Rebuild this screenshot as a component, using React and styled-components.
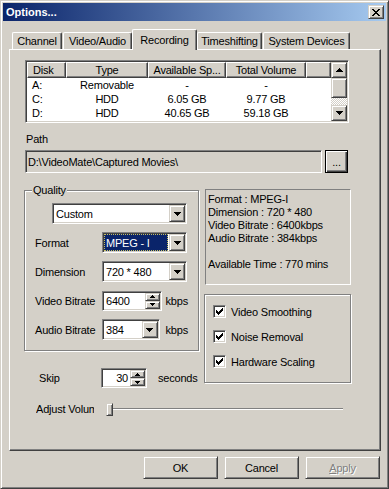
import React from 'react';
import styled, { createGlobalStyle, css } from 'styled-components';

const GlobalStyle = createGlobalStyle`
    html, body {
        margin: 0;
        padding: 0;
        background: #d4d0c8;
    }
    body {
        font-family: "Liberation Sans", Arial, sans-serif;
        font-size: 11px;
        color: #000;
    }
    * {
        box-sizing: border-box;
    }
`;

const raisedEdge = css`
    border: 1px solid;
    border-color: #d4d0c8 #404040 #404040 #d4d0c8;
    box-shadow: inset 1px 1px #fff, inset -1px -1px #808080;
`;

const sunkenEdge = css`
    border: 1px solid;
    border-color: #808080 #fff #fff #808080;
    box-shadow: inset 1px 1px #404040, inset -1px -1px #d4d0c8;
`;

const etchedEdge = css`
    border: 1px solid #808080;
    box-shadow: inset 1px 1px #fff, 1px 1px #fff;
`;

const Window = styled.div`
    width: 389px;
    height: 489px;
    ${raisedEdge}
    padding: 2px;
    display: flex;
    flex-direction: column;
    background: #d4d0c8;
    letter-spacing: -0.2px;
`;

const TitleBar = styled.div`
    height: 18px;
    display: flex;
    align-items: center;
    padding: 0 2px 0 3px;
    background: linear-gradient(to right, #0a246a, #a6caf0);
`;

const Title = styled.span`
    color: #fff;
    font-weight: bold;
    letter-spacing: 0;
`;

const CaptionButton = styled.div`
    margin-left: auto;
    width: 16px;
    height: 14px;
    ${raisedEdge}
    background: #d4d0c8;
    display: flex;
    align-items: center;
    justify-content: center;
`;

const Body = styled.div`
    flex: 1;
    display: flex;
    flex-direction: column;
    padding: 8px 5px 7px 6px;
`;

const TabRow = styled.div`
    height: 20px;
    display: flex;
    align-items: flex-end;
    padding-left: 3px;
    position: relative;
    z-index: 1;
`;

const Tab = styled.div`
    width: ${props => props.$w}px;
    margin-right: ${props => props.$gap}px;
    height: ${props => props.$active ? 21 : 17}px;
    margin-bottom: ${props => props.$active ? -1 : 0}px;
    padding-bottom: ${props => props.$active ? 1 : 0}px;
    background: #d4d0c8;
    border-top: 1px solid #fff;
    border-left: 1px solid #fff;
    border-right: 1px solid #404040;
    box-shadow: inset -1px 0 #808080;
    border-radius: 2px 2px 0 0;
    display: flex;
    align-items: center;
    justify-content: center;
    white-space: nowrap;
`;

const Panel = styled.div`
    flex: 1;
    border: 1px solid;
    border-color: #fff #404040 #404040 #fff;
    box-shadow: inset -1px -1px #808080;
    padding: 10px 0 0 15px;
    display: flex;
    flex-direction: column;
`;

const ListView = styled.div`
    width: 324px;
    height: 63px;
    ${sunkenEdge}
    padding: 1px;
    background: #fff;
    display: flex;
`;

const ListMain = styled.div`
    flex: 1;
    display: flex;
    flex-direction: column;
    overflow: hidden;
`;

const HeaderRow = styled.div`
    height: 16px;
    display: flex;
    background: #d4d0c8;
`;

const HeaderCell = styled.div`
    width: ${props => props.$w ? props.$w + 'px' : 'auto'};
    flex: ${props => props.$w ? 'none' : 1};
    height: 16px;
    border-top: 1px solid #fff;
    border-left: 1px solid #fff;
    border-right: 1px solid #404040;
    border-bottom: 1px solid #404040;
    box-shadow: inset -1px -1px #808080;
    display: flex;
    align-items: center;
    justify-content: ${props => props.$left ? 'flex-start' : 'center'};
    padding-left: ${props => props.$left ? 5 : 0}px;
    white-space: nowrap;
    overflow: hidden;
`;

const ListRow = styled.div`
    height: 14px;
    display: flex;
    align-items: center;
`;

const ListCell = styled.div`
    width: ${props => props.$w}px;
    text-align: ${props => props.$left ? 'left' : 'center'};
    padding-left: ${props => props.$left ? 5 : 0}px;
    white-space: nowrap;
`;

const ScrollBar = styled.div`
    width: 16px;
    display: flex;
    flex-direction: column;
`;

const ScrollButton = styled.div`
    height: ${props => props.$h}px;
    ${raisedEdge}
    background: #d4d0c8;
    display: flex;
    align-items: center;
    justify-content: center;
`;

const ScrollTrack = styled.div`
    flex: 1;
    background: repeating-conic-gradient(#fff 0% 25%, #d4d0c8 0% 50%) 0 0 / 2px 2px;
`;

const FieldLabel = styled.div`
    margin: 10px 0 0 1px;
    line-height: 13px;
`;

const PathRow = styled.div`
    margin-top: 4px;
    display: flex;
    gap: 3px;
    height: 23px;
`;

const PathField = styled.div`
    width: 297px;
    ${sunkenEdge}
    background: #d4d0c8;
    display: flex;
    align-items: center;
    padding-left: 2px;
    white-space: nowrap;
`;

const BrowseButton = styled.div`
    width: 23px;
    border: 1px solid #000;
    box-shadow: inset 1px 1px #fff, inset -1px -1px #404040, inset -2px -2px #808080;
    display: flex;
    align-items: center;
    justify-content: center;
    padding-top: 1px;
`;

const Middle = styled.div`
    margin: 11px 0 0 -1px;
    display: flex;
    gap: 6px;
    align-items: flex-start;
`;

const Column = styled.div`
    width: ${props => props.$w}px;
    display: flex;
    flex-direction: column;
`;

const GroupBox = styled.div`
    position: relative;
    ${etchedEdge}
    margin-top: ${props => props.$top}px;
    margin-left: ${props => props.$left || 0}px;
    height: ${props => props.$h}px;
    padding: ${props => props.$pad};
    display: flex;
    flex-direction: column;
    gap: ${props => props.$gap}px;
`;

const GroupTitle = styled.span`
    position: absolute;
    top: -7px;
    left: 7px;
    padding: 0 1px;
    line-height: 13px;
    background: #d4d0c8;
`;

const PresetRow = styled.div`
    padding-left: 17px;
    display: flex;
`;

const FormRow = styled.div`
    height: 21px;
    display: flex;
    align-items: center;
`;

const RowLabel = styled.span`
    width: ${props => props.$w}px;
    flex: none;
    white-space: nowrap;
`;

const Unit = styled.span`
    margin-left: ${props => props.$gap}px;
`;

const ComboBox = styled.div`
    width: ${props => props.$w}px;
    height: 21px;
    ${sunkenEdge}
    padding: 1px;
    background: #fff;
    display: flex;
`;

const ComboValue = styled.div`
    flex: 1;
    display: flex;
    align-items: center;
    padding-left: 2px;
    margin-right: 1px;
    white-space: nowrap;
    background: ${props => props.$selected ? '#0a246a' : 'transparent'};
    color: ${props => props.$selected ? '#fff' : '#000'};
    outline: ${props => props.$selected ? '1px dotted #c8c060' : 'none'};
    outline-offset: -1px;
`;

const DropButton = styled.div`
    width: 16px;
    ${raisedEdge}
    background: #d4d0c8;
    display: flex;
    align-items: center;
    justify-content: center;
`;

const SpinBox = styled.div`
    width: ${props => props.$w}px;
    height: 20px;
    ${sunkenEdge}
    padding: 1px;
    background: #fff;
    display: flex;
`;

const SpinValue = styled.div`
    flex: 1;
    display: flex;
    align-items: center;
    justify-content: ${props => props.$right ? 'flex-end' : 'flex-start'};
    padding: 0 2px;
`;

const SpinButtons = styled.div`
    width: 15px;
    display: flex;
    flex-direction: column;
`;

const SpinButton = styled.div`
    flex: 1;
    ${raisedEdge}
    background: #d4d0c8;
    display: flex;
    align-items: center;
    justify-content: center;
`;

const SkipRow = styled.div`
    margin-top: 17px;
    padding-left: 15px;
    height: 20px;
    display: flex;
    align-items: center;
`;

const InfoBox = styled.div`
    margin-top: 5px;
    height: 96px;
    border: 1px solid;
    border-color: #808080 #fff #fff #808080;
    padding: 3px 2px;
    line-height: 13px;
    white-space: pre;
`;

const CheckRow = styled.div`
    height: 25px;
    display: flex;
    align-items: center;
    gap: 5px;
`;

const CheckBox = styled.div`
    width: 13px;
    height: 13px;
    ${sunkenEdge}
    background: #fff;
    display: flex;
    align-items: center;
    justify-content: center;
`;

const VolumeRow = styled.div`
    margin-top: 13px;
    padding-left: 11px;
    height: 16px;
    display: flex;
    align-items: center;
`;

const ClippedLabel = styled.span`
    width: 58px;
    margin-right: 12px;
    overflow: hidden;
    white-space: nowrap;
`;

const Slider = styled.div`
    width: 237px;
    height: 16px;
    display: flex;
    align-items: center;
    background:
        linear-gradient(#808080, #808080) 0 7px / 100% 1px no-repeat,
        linear-gradient(#fff, #fff) 0 8px / 100% 1px no-repeat;
`;

const SliderThumb = styled.div`
    width: 7px;
    height: 13px;
    ${raisedEdge}
    background: #d4d0c8;
`;

const ButtonRow = styled.div`
    margin-top: 5px;
    height: 23px;
    display: flex;
    justify-content: flex-end;
    gap: 6px;
    padding-right: 1px;
`;

const DialogButton = styled.div`
    width: 75px;
    height: 23px;
    ${raisedEdge}
    background: #d4d0c8;
    display: flex;
    align-items: center;
    justify-content: center;
    color: ${props => props.$disabled ? '#808080' : '#000'};
    text-shadow: ${props => props.$disabled ? '1px 1px #fff' : 'none'};
`;

const Arrow = ({ dir = 'down', w = 7 }) => {
    const h = Math.ceil(w / 2);
    const pts = dir === 'down'
        ? `0,0 ${w},0 ${w / 2},${h}`
        : `0,${h} ${w},${h} ${w / 2},0`;
    return (
        <svg width={w} height={h} viewBox={`0 0 ${w} ${h}`} shapeRendering="crispEdges">
            <polygon points={pts} fill="#000" />
        </svg>
    );
};

const CheckMark = () => (
    <svg width="7" height="7" viewBox="0 0 7 7" shapeRendering="crispEdges">
        <path d="M0 2h1v1h1v1h1V3h1V2h1V1h1V0h1v3H6v1H5v1H4v1H3v1H2V6H1V5H0z" fill="#000" />
    </svg>
);

const Combo = ({ w, value, selected }) => (
    <ComboBox $w={w}>
        <ComboValue $selected={selected}>{value}</ComboValue>
        <DropButton><Arrow /></DropButton>
    </ComboBox>
);

const Spin = ({ w, value, right }) => (
    <SpinBox $w={w}>
        <SpinValue $right={right}>{value}</SpinValue>
        <SpinButtons>
            <SpinButton><Arrow dir="up" w={5} /></SpinButton>
            <SpinButton><Arrow dir="down" w={5} /></SpinButton>
        </SpinButtons>
    </SpinBox>
);

const tabs = [
    { label: 'Channel', w: 50, gap: 1 },
    { label: 'Video/Audio', w: 69, gap: 0 },
    { label: 'Recording', w: 65, gap: 0, active: true },
    { label: 'Timeshifting', w: 65, gap: 1 },
    { label: 'System Devices', w: 87, gap: 0 },
];

const columns = [
    { label: 'Disk', w: 39, left: true },
    { label: 'Type', w: 82 },
    { label: 'Available Sp...', w: 78 },
    { label: 'Total Volume', w: 80 },
];

const disks = [
    ['A:', 'Removable', '-', '-'],
    ['C:', 'HDD', '6.05 GB', '9.77 GB'],
    ['D:', 'HDD', '40.65 GB', '59.18 GB'],
];

const info = 'Format : MPEG-I\nDimension : 720 * 480\nVideo Bitrate : 6400kbps\nAudio Bitrate : 384kbps\n\nAvailable Time : 770 mins';

const options = ['Video Smoothing', 'Noise Removal', 'Hardware Scaling'];

const App = () => {
    return (
        <>
            <GlobalStyle />
            <Window>
                <TitleBar>
                    <Title>Options...</Title>
                    <CaptionButton>
                        <svg width="8" height="7" viewBox="0 0 8 7" shapeRendering="crispEdges">
                            <path d="M0 0h2v1h1v1h2V1h1V0h2v1H7v1H6v1H5v1h1v1h1v1h1v1H6V6H5V5H3v1H2v1H0V6h1V5h1V4h1V3H2V2H1V1H0z" fill="#000" />
                        </svg>
                    </CaptionButton>
                </TitleBar>

                <Body>
                    <TabRow>
                        {tabs.map(t => (
                            <Tab key={t.label} $w={t.w} $gap={t.gap} $active={t.active}>{t.label}</Tab>
                        ))}
                    </TabRow>

                    <Panel>
                        <ListView>
                            <ListMain>
                                <HeaderRow>
                                    {columns.map(c => (
                                        <HeaderCell key={c.label} $w={c.w} $left={c.left}>{c.label}</HeaderCell>
                                    ))}
                                    <HeaderCell />
                                </HeaderRow>
                                {disks.map(row => (
                                    <ListRow key={row[0]}>
                                        {row.map((cell, i) => (
                                            <ListCell key={i} $w={columns[i].w} $left={columns[i].left}>{cell}</ListCell>
                                        ))}
                                    </ListRow>
                                ))}
                            </ListMain>
                            <ScrollBar>
                                <ScrollButton $h={16}><Arrow dir="up" /></ScrollButton>
                                <ScrollButton $h={20} />
                                <ScrollTrack />
                                <ScrollButton $h={16}><Arrow /></ScrollButton>
                            </ScrollBar>
                        </ListView>

                        <FieldLabel>Path</FieldLabel>
                        <PathRow>
                            <PathField>{'D:\\VideoMate\\Captured Movies\\'}</PathField>
                            <BrowseButton>...</BrowseButton>
                        </PathRow>

                        <Middle>
                            <Column $w={175}>
                                <GroupBox $top={6} $h={161} $pad="12px 10px 0 10px" $gap={8}>
                                    <GroupTitle>Quality</GroupTitle>
                                    <PresetRow>
                                        <Combo w={135} value="Custom" />
                                    </PresetRow>
                                    <FormRow>
                                        <RowLabel $w={67}>Format</RowLabel>
                                        <Combo w={85} value="MPEG - I" selected />
                                    </FormRow>
                                    <FormRow>
                                        <RowLabel $w={67}>Dimension</RowLabel>
                                        <Combo w={85} value="720 * 480" />
                                    </FormRow>
                                    <FormRow>
                                        <RowLabel $w={67}>Video Bitrate</RowLabel>
                                        <Spin w={61} value="6400" />
                                        <Unit $gap={4}>kbps</Unit>
                                    </FormRow>
                                    <FormRow>
                                        <RowLabel $w={67}>Audio Bitrate</RowLabel>
                                        <Combo w={61} value="384" />
                                        <Unit $gap={6}>kbps</Unit>
                                    </FormRow>
                                </GroupBox>

                                <SkipRow>
                                    <RowLabel $w={62}>Skip</RowLabel>
                                    <Spin w={46} value="30" right />
                                    <Unit $gap={11}>seconds</Unit>
                                </SkipRow>
                            </Column>

                            <Column $w={146}>
                                <InfoBox>{info}</InfoBox>
                                <GroupBox $top={9} $left={-1} $h={89} $pad="4px 8px" $gap={0}>
                                    {options.map(o => (
                                        <CheckRow key={o}>
                                            <CheckBox><CheckMark /></CheckBox>
                                            <span>{o}</span>
                                        </CheckRow>
                                    ))}
                                </GroupBox>
                            </Column>
                        </Middle>

                        <VolumeRow>
                            <ClippedLabel>Adjust Volume</ClippedLabel>
                            <Slider>
                                <SliderThumb />
                            </Slider>
                        </VolumeRow>
                    </Panel>

                    <ButtonRow>
                        <DialogButton>OK</DialogButton>
                        <DialogButton>Cancel</DialogButton>
                        <DialogButton $disabled><u>A</u>pply</DialogButton>
                    </ButtonRow>
                </Body>
            </Window>
        </>
    );
};

export default App;
